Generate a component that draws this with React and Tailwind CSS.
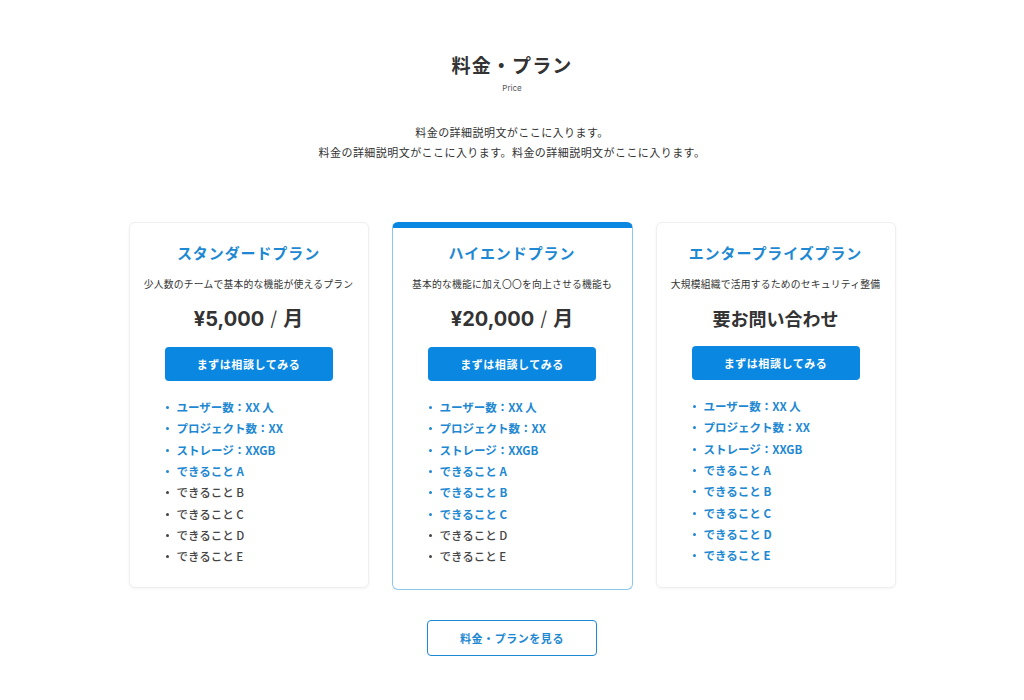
const plans = [
  {
    name: "スタンダードプラン",
    sub: "少人数のチームで基本的な機能が使えるプラン",
    price: "¥5,000",
    jp: false,
    on: 4,
  },
  {
    name: "ハイエンドプラン",
    sub: "基本的な機能に加え〇〇を向上させる機能も",
    price: "¥20,000",
    jp: false,
    on: 6,
    featured: true,
  },
  {
    name: "エンタープライズプラン",
    sub: "大規模組織で活用するためのセキュリティ整備",
    price: "要お問い合わせ",
    jp: true,
    on: 8,
  },
];

const features = [
  "ユーザー数：XX 人",
  "プロジェクト数：XX",
  "ストレージ：XXGB",
  "できること A",
  "できること B",
  "できること C",
  "できること D",
  "できること E",
];

const jpFont = "font-['Noto_Sans_CJK_JP','Noto_Sans',sans-serif]";

const PlanCard = ({ plan }) => {
  return (
    <div
      className={
        plan.featured
          ? "flex flex-col w-[241px] h-[368px] rounded-md border border-[#8cc6e8] border-t-[6px] border-t-[#0a87e0] pt-[14px] bg-white"
          : "flex flex-col w-[240px] h-[366px] rounded-md border border-[#efefef] shadow-[0_1px_3px_rgba(0,0,0,0.05)] pt-[19px] bg-white"
      }
    >
      <div className="text-center text-[15px] leading-[22px] font-bold tracking-[0.06em] text-[#1e88d2]">
        {plan.name}
      </div>
      <div className="mt-3 text-center text-[9.8px] leading-[16px] text-[#333] tracking-[0.02em]">
        {plan.sub}
      </div>
      {plan.jp ? (
        <div className="mt-[12px] text-center text-[18px] leading-[28px] font-bold text-[#333]">
          {plan.price}
        </div>
      ) : (
        <div className="mt-[12px] text-center text-[20px] leading-[28px] font-bold text-[#333] font-['Inter','Noto_Sans_CJK_JP',sans-serif]">
          {plan.price}
          <span className="font-light mx-[6px]">/</span>
          <span className="font-['Noto_Sans_CJK_JP',sans-serif]">月</span>
        </div>
      )}
      <div className="mt-[14px] mx-auto w-[168px] h-[34px] rounded-sm bg-[#0a87e0] flex items-center justify-center text-white text-[11px] font-bold tracking-[0.05em]">
        まずは相談してみる
      </div>
      <ul className="mt-[16px] pl-[36px] flex flex-col">
        {features.map((f, i) => (
          <li
            key={i}
            className={`flex items-center h-[21.3px] text-[11.5px] ${
              i < plan.on ? "text-[#1e88d2] font-bold" : "text-[#444] font-medium"
            }`}
          >
            <span
              className={`w-[3px] h-[3px] rounded-full mr-[8px] ${
                i < plan.on ? "bg-[#1e88d2]" : "bg-[#444]"
              }`}
            ></span>
            {f}
          </li>
        ))}
      </ul>
    </div>
  );
};

const App = () => {
  return (
    <div className={`w-full min-h-[700px] bg-white ${jpFont}`}>
      <div className="flex flex-col items-center pt-[51px]">
        <h2 className="text-[19px] leading-[28px] font-bold text-[#333] tracking-[0.06em]">
          料金・プラン
        </h2>
        <div className="mt-[3px] text-[8px] leading-[12px] text-[#555] font-['Inter',sans-serif]">
          Price
        </div>
        <div className="mt-[28px] text-center text-[11px] leading-[20px] text-[#333] tracking-[0.04em]">
          <p>料金の詳細説明文がここに入ります。</p>
          <p>料金の詳細説明文がここに入ります。料金の詳細説明文がここに入ります。</p>
        </div>
      </div>
      <div className="mt-[60px] flex justify-center items-start gap-[23px]">
        {plans.map((p, i) => (
          <PlanCard key={i} plan={p} />
        ))}
      </div>
      <div className="mt-[30px] flex justify-center">
        <div className="w-[170px] h-[36px] rounded-sm border border-[#1e88d2] flex items-center justify-center text-[11px] font-bold text-[#1e88d2] tracking-[0.05em]">
          料金・プランを見る
        </div>
      </div>
    </div>
  );
};

export default App;
